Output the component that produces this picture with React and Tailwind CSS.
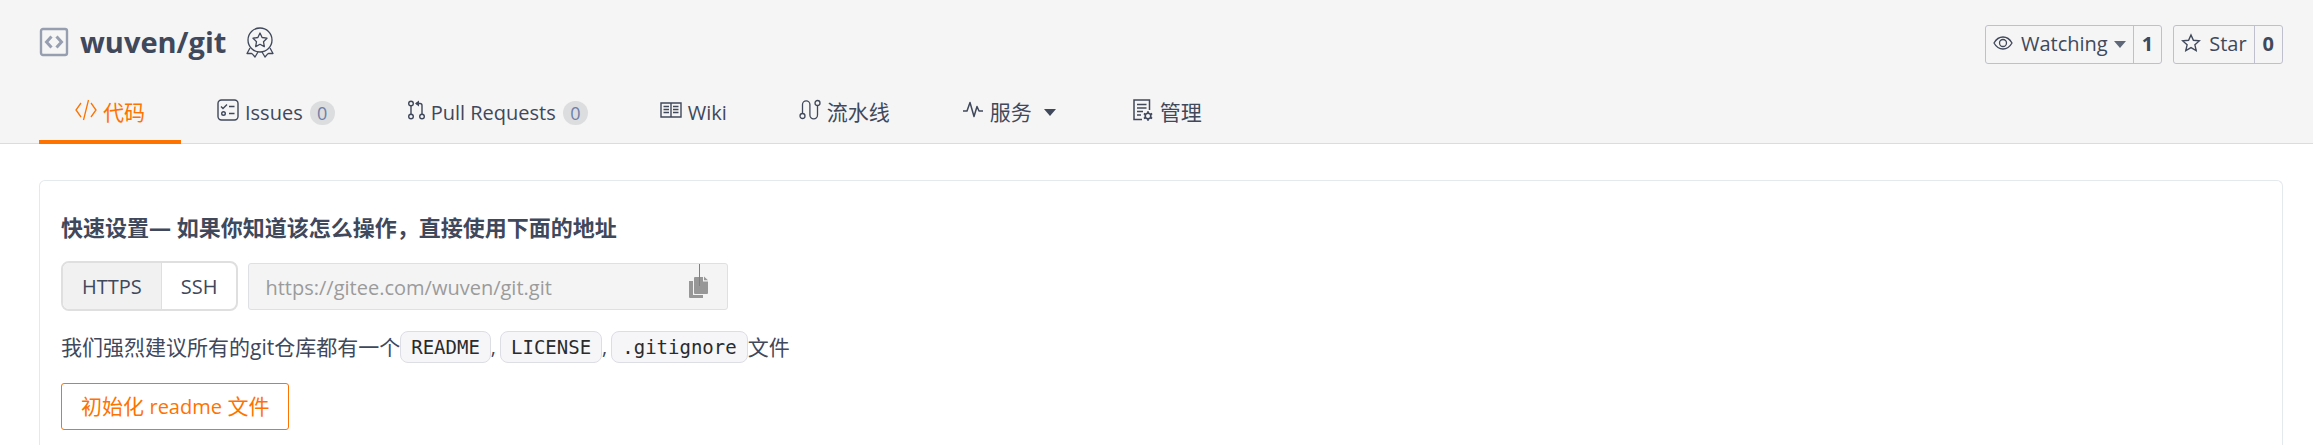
import React, { useState } from "react";

const tabs = [
  { key: "code", label: "代码", icon: CodeIcon },
  { key: "issues", label: "Issues", icon: IssuesIcon, count: 0 },
  { key: "pulls", label: "Pull Requests", icon: PullIcon, count: 0 },
  { key: "wiki", label: "Wiki", icon: WikiIcon },
  { key: "pipeline", label: "流水线", icon: PipelineIcon },
  { key: "service", label: "服务", icon: PulseIcon, dropdown: true },
  { key: "manage", label: "管理", icon: ManageIcon },
];

const urls = {
  HTTPS: "https://gitee.com/wuven/git.git",
  SSH: "git@gitee.com:wuven/git.git",
};

function RepoIcon() {
  return (
    <svg width="30" height="30" viewBox="0 0 30 30" fill="none" stroke="#979eb0" aria-hidden="true">
      <rect x="2" y="2" width="26" height="26" rx="2" strokeWidth="2.4" />
      <path d="M12.500 9.500 7.500 15l5 5.500M17.500 9.500l5 5.500-5 5.500" strokeWidth="3" />
    </svg>
  );
}

function MedalIcon() {
  return (
    <svg width="28" height="31" viewBox="0 0 28 31" fill="none" stroke="#40485b" strokeWidth="1.3" strokeLinejoin="round" aria-hidden="true">
      <circle cx="14" cy="13" r="12" />
      <path d="m14 6 2.100 4.500 4.900.7-3.500 3.500.8 4.900-4.300-2.300-4.300 2.300.8-4.900L7 11.200l4.900-.7z" />
      <path d="M4 21 1 26.500l4.200-.2 1.500 1 2.300 2.700 3-5M24 21l3 5.500-4.200-.2-1.500 1-2.300 2.700-3-5" />
    </svg>
  );
}

function CodeIcon() {
  return (
    <svg width="22" height="22" viewBox="0 0 22 22" fill="none" stroke="currentColor" strokeWidth="1.3" aria-hidden="true">
      <path d="M6 4 1 11l5 7M16 4l5 7-5 7M13.500 1 8.500 21" />
    </svg>
  );
}

function IssuesIcon() {
  return (
    <svg width="22" height="22" viewBox="0 0 22 22" fill="none" stroke="currentColor" strokeWidth="1.4" aria-hidden="true">
      <rect x="1" y="1" width="20" height="20" rx="3.500" />
      <path d="m4 7.500 2 2 4-4M12 7.500h5.500M12 14.500h5.500" />
      <circle cx="6.500" cy="14.500" r="1.800" />
    </svg>
  );
}

function PullIcon() {
  return (
    <svg width="18" height="22" viewBox="0 0 18 22" fill="none" stroke="currentColor" strokeWidth="1.4" aria-hidden="true">
      <circle cx="4" cy="4.500" r="2.300" />
      <circle cx="4" cy="17.500" r="2.300" />
      <circle cx="15" cy="17.500" r="2.300" />
      <path d="M4 7v8M15 15V6.500q0-2-2-2H9" />
      <path d="m12 1.500-4 3 4 3z" fill="currentColor" stroke="none" />
    </svg>
  );
}

function WikiIcon() {
  return (
    <svg width="22" height="22" viewBox="0 0 22 22" fill="none" stroke="currentColor" strokeWidth="1.4" aria-hidden="true">
      <path d="M1 4h20v14H1zM11 4v14" />
      <path d="M3.500 7.500H9M3.500 10.500H9M3.500 13.500H9M13 7.500h5.500M13 10.500h5.500M13 13.500h5.500" />
    </svg>
  );
}

function PipelineIcon() {
  return (
    <svg width="22" height="22" viewBox="0 0 22 22" fill="none" stroke="currentColor" strokeWidth="1.3" aria-hidden="true">
      <circle cx="3.500" cy="17" r="2.500" />
      <circle cx="18.500" cy="4" r="2.500" />
      <path d="M3.500 14.500V5.500a3.700 3.700 0 0 1 7.400 0V16a3.800 3.800 0 0 0 7.600 0V6.500" />
    </svg>
  );
}

function PulseIcon() {
  return (
    <svg width="22" height="22" viewBox="0 0 22 22" fill="none" stroke="currentColor" strokeWidth="1.5" strokeLinejoin="round" aria-hidden="true">
      <path d="M1 12h4l3-8.500 4 14 3-10 2 4.500h4" />
    </svg>
  );
}

function ManageIcon() {
  return (
    <svg width="22" height="24" viewBox="0 0 22 24" fill="none" stroke="currentColor" strokeWidth="1.5" aria-hidden="true">
      <path d="M10 21.500H2V2h15.500v10M5 6.500h9.500M5 10h9.500M5 13.500h6M5 17h4" />
      <circle cx="16" cy="18" r="2.800" strokeWidth="1.6" />
      <path d="M16 13.200V15M16 21v1.800M11.900 15.600l1.500.9M18.600 19.500l1.500.9M11.900 20.400l1.500-.9M18.600 16.500l1.500-.9" strokeWidth="1.8" />
    </svg>
  );
}

function EyeIcon() {
  return (
    <svg width="20" height="16" viewBox="0 0 20 16" fill="none" stroke="#40485b" strokeWidth="1.3" aria-hidden="true">
      <path d="M1 8c4.500-8 13.500-8 18 0-4.500 8-13.500 8-18 0z" />
      <circle cx="10" cy="8" r="3.500" />
    </svg>
  );
}

function StarIcon() {
  return (
    <svg width="20" height="20" viewBox="0 0 20 20" fill="none" stroke="#40485b" strokeWidth="1.4" aria-hidden="true">
      <path d="m10 2 2.400 5.300 5.900.6-4.400 3.900 1.300 5.800L10 14.600l-5.200 3 1.300-5.800-4.400-3.900 5.900-.6z" />
    </svg>
  );
}

function CopyIcon() {
  return (
    <svg width="20" height="36" viewBox="0 0 20 36" fill="#979797" aria-hidden="true">
      <path d="M0 17h4v14h10v3H1q-1 0-1-1z" />
      <path d="M6 13h8v4.500h5V29q0 1-1 1H6q-1 0-1-1V14q0-1 1-1zM15 12.500l4 3.800h-4z" />
      <path d="M10.500 0v22" stroke="#808080" strokeWidth="1" fill="none" />
    </svg>
  );
}

function Caret() {
  return <span className="block border-x-6 border-t-7 border-x-transparent border-t-current" />;
}

function CountButton({ icon, label, count, caret }) {
  return (
    <div className="flex h-[39px] rounded-[3px] border border-[#bfc0ce] text-xl text-[#40485b]">
      <button type="button" className="flex items-center px-[7px]">
        <span className="pb-0.5">{icon}</span>
        <span className="ml-2">{label}</span>
        {caret && (
          <span className="ml-1.5 text-[#5f6878]">
            <Caret />
          </span>
        )}
      </button>
      <a href="#" className="flex items-center border-l border-[#bfc0ce] px-2 font-bold">
        {count}
      </a>
    </div>
  );
}

function FileName({ children }) {
  return (
    <code className="flex h-8 items-center rounded-lg border border-[#dddde6] bg-[#f6f6f9] px-2.5 font-['DejaVu_Sans_Mono',monospace] text-[19px] text-[#2b2b2b]">
      {children}
    </code>
  );
}

export default function App() {
  const [active, setActive] = useState("code");
  const [protocol, setProtocol] = useState("HTTPS");

  return (
    <div className="flex min-h-screen flex-col bg-white font-['Open_Sans','Noto_Sans_CJK_SC',sans-serif] text-xl text-[#40485b]">
      <header className="border-b border-[#dcdcdd] bg-[#f5f5f5] pr-[30px] pl-[39px]">
        <div className="flex h-[84px] items-center justify-between">
          <div className="flex items-center">
            <RepoIcon />
            <h1 className="ml-[11px] text-[29px] leading-9 font-bold">
              <a href="#">wuven/git</a>
            </h1>
            <span className="ml-5">
              <MedalIcon />
            </span>
          </div>
          <div className="flex items-center gap-[11px] pt-1">
            <CountButton icon={<EyeIcon />} label="Watching" count={1} caret />
            <CountButton icon={<StarIcon />} label="Star" count={0} />
          </div>
        </div>

        <nav className="-mb-px flex h-[60px]">
          {tabs.map((tab) => {
            const Icon = tab.icon;
            return (
              <a
                key={tab.key}
                href="#"
                onClick={() => setActive(tab.key)}
                className={
                  active === tab.key
                    ? "flex items-center border-b-4 border-[#fe7300] px-9 text-[#fe7300]"
                    : "flex items-center border-b-4 border-transparent px-9"
                }
              >
                <span className="mr-1.5 pb-1">
                  <Icon />
                </span>
                <span className="flex items-center pt-0.5">
                  <span className={/[a-z]/.test(tab.label) ? "text-xl" : "text-[21px]"}>{tab.label}</span>
                  {tab.count !== undefined && (
                    <span className="ml-[7px] flex h-6 w-[25px] items-center justify-center rounded-full bg-[#dcdddf] text-lg text-[#6f7fa8]">
                      {tab.count}
                    </span>
                  )}
                  {tab.dropdown && (
                    <span className="mr-1 ml-3">
                      <Caret />
                    </span>
                  )}
                </span>
              </a>
            );
          })}
        </nav>
      </header>

      <main className="flex flex-1 flex-col pt-9 pr-[30px] pl-[39px]">
        <section className="flex-1 rounded-t-md border border-b-0 border-[#e3e9ed] px-[21px] pt-[30px] pb-3">
          <h2 className="text-[22px] leading-8 font-bold">快速设置— 如果你知道该怎么操作，直接使用下面的地址</h2>

          <div className="mt-[18px] flex items-center gap-2.5">
            <div className="flex h-[50px] overflow-hidden rounded-lg border-2 border-[#dfdfe0]">
              {Object.keys(urls).map((name) => (
                <button
                  key={name}
                  type="button"
                  onClick={() => setProtocol(name)}
                  className={
                    protocol === name
                      ? "border-r border-[#dfdfe0] bg-[#f1f1f1] px-[19px] pt-0.5"
                      : "px-[19px] pt-0.5"
                  }
                >
                  {name}
                </button>
              ))}
            </div>
            <div className="flex h-[47px] w-[480px] rounded-[3px] border border-[#dde1e6] bg-[#f4f4f4]">
              <input
                readOnly
                aria-label="仓库地址"
                value={urls[protocol]}
                className="min-w-0 flex-1 bg-transparent px-4 pt-1 text-[#9b9b9b] outline-none"
              />
              <button type="button" aria-label="复制" className="mr-[18px] self-start">
                <CopyIcon />
              </button>
            </div>
          </div>

          <p className="mt-5 flex items-center leading-8">
            <span className="text-[21px]">我们强烈建议所有的git仓库都有一个</span>
            <FileName>README</FileName>
            <span className="mr-1">,</span>
            <FileName>LICENSE</FileName>
            <span className="mr-1">,</span>
            <FileName>.gitignore</FileName>
            <span className="text-[21px]">文件</span>
          </p>

          <button type="button" className="mt-5 h-[47px] rounded-[3px] border border-[#fe7300] px-[19px] text-[21px] text-[#fe7300]">
            初始化 <span className="text-xl">readme</span> 文件
          </button>
        </section>
      </main>
    </div>
  );
}
